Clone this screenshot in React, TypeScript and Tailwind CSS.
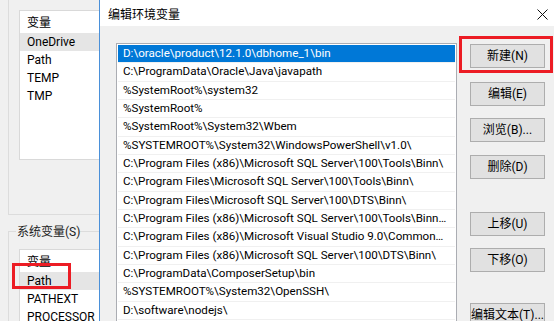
import React from "react";

const PATHS = [
  "D:\\oracle\\product\\12.1.0\\dbhome_1\\bin",
  "C:\\ProgramData\\Oracle\\Java\\javapath",
  "%SystemRoot%\\system32",
  "%SystemRoot%",
  "%SystemRoot%\\System32\\Wbem",
  "%SYSTEMROOT%\\System32\\WindowsPowerShell\\v1.0\\",
  "C:\\Program Files (x86)\\Microsoft SQL Server\\100\\Tools\\Binn\\",
  "C:\\Program Files\\Microsoft SQL Server\\100\\Tools\\Binn\\",
  "C:\\Program Files\\Microsoft SQL Server\\100\\DTS\\Binn\\",
  "C:\\Program Files (x86)\\Microsoft SQL Server\\100\\Tools\\Binn\\VSShell\\Common7\\IDE\\",
  "C:\\Program Files (x86)\\Microsoft Visual Studio 9.0\\Common7\\IDE\\PrivateAssemblies\\",
  "C:\\Program Files (x86)\\Microsoft SQL Server\\100\\DTS\\Binn\\",
  "C:\\ProgramData\\ComposerSetup\\bin",
  "%SYSTEMROOT%\\System32\\OpenSSH\\",
  "D:\\software\\nodejs\\",
  "",
];

// buttons on the right, with their top margin
const BUTTONS: { label: string; mt: string }[] = [
  { label: "新建(N)", mt: "mt-0" },
  { label: "编辑(E)", mt: "mt-[14px]" },
  { label: "浏览(B)...", mt: "mt-[12px]" },
  { label: "删除(D)", mt: "mt-[13px]" },
  { label: "上移(U)", mt: "mt-[33px]" },
  { label: "下移(O)", mt: "mt-[12px]" },
  { label: "编辑文本(T)...", mt: "mt-[31px]" },
];

const WinButton: React.FC<{ label: string; className?: string }> = ({ label, className }) => (
  <div
    className={[
      "w-[75px] h-[24px] shrink-0 bg-[#e1e1e1] border border-[#adadad] flex items-center justify-center whitespace-nowrap",
      className ?? "",
    ].join(" ")}
  >
    {label}
  </div>
);

const VarList: React.FC<{ rows: string[]; selected: number; height: string }> = ({
  rows,
  selected,
  height,
}) => (
  <div className={["w-[100px] bg-white border border-[#d9d9d9] overflow-hidden", height].join(" ")}>
    <div className="h-[21px] flex items-center pl-[7px] mt-[1px]">变量</div>
    {rows.map((r, i) => (
      <div
        key={r}
        className={[
          "h-[18px] flex items-center pl-[7px] whitespace-nowrap",
          i === selected ? "bg-[#e5e5e5]" : "",
        ].join(" ")}
      >
        {r}
      </div>
    ))}
  </div>
);

export default function App() {
  return (
    <div className="relative w-[554px] h-[321px] overflow-hidden bg-[#f0f0f0] text-[12px] text-black font-['Microsoft_YaHei_UI','Roboto','Noto_Sans_CJK_SC',sans-serif]">
      {/* window behind the dialog */}
      <div className="pl-2">
        <div className="h-[215px] w-[200px] border-l border-b border-[#dcdcdc] pl-[10px] pt-[10px]">
          <VarList rows={["OneDrive", "Path", "TEMP", "TMP"]} selected={0} height="h-[150px]" />
        </div>
        <div className="mt-[16px] w-[200px] h-[100px] border-l border-t border-[#dcdcdc] pl-[10px]">
          <div className="-mt-[9px] ml-[-3px] pl-[1px] w-fit bg-[#f0f0f0] text-[#222]">系统变量(S)</div>
          <div className="mt-[8px]">
            <VarList rows={["Path", "PATHEXT", "PROCESSOR_ARCHITECTURE"]} selected={0} height="h-[100px]" />
          </div>
        </div>
      </div>

      {/* red marker on system Path row */}
      <div className="absolute left-[12px] top-[263px] w-[59px] h-[26px] border-[3px] border-[#ec1c24]" />

      {/* edit dialog */}
      <div className="absolute left-[99px] top-0 w-[470px] h-[340px] border-l border-[#4a90d9] bg-[#f0f0f0] flex flex-col">
        <div className="h-[26px] bg-white flex items-center justify-between pl-[8px] pr-[21px] shrink-0">
          <span className="mt-[3px]">编辑环境变量</span>
          <svg width="11" height="11" viewBox="0 0 11 11" className="mt-[3px]">
            <path d="M0.5 0.5 L10.5 10.5 M10.5 0.5 L0.5 10.5" stroke="#111" strokeWidth="1" />
          </svg>
        </div>
        <div className="flex pl-[16px] pt-[17px] gap-[13px]">
          <div className="w-[341px] h-[300px] bg-white border border-[#abadb3] p-[1px] overflow-hidden shrink-0 text-[11.6px]">
            {PATHS.map((p, i) => (
              <div
                key={i}
                className={[
                  "h-[18.35px] pl-[5px] pr-[6px] leading-[17.35px] whitespace-nowrap overflow-hidden text-ellipsis border-b border-[#f0f0f0]",
                  i === 0 ? "bg-[#0078d7] text-white border-[#0078d7]" : "",
                ].join(" ")}
              >
                {p}
              </div>
            ))}
          </div>
          <div className="flex flex-col pt-[1px]">
            {BUTTONS.map((b) => (
              <WinButton key={b.label} label={b.label} className={b.mt} />
            ))}
          </div>
        </div>
      </div>

      {/* red marker on 新建 button */}
      <div className="absolute left-[459px] top-[36px] w-[94px] h-[37px] border-[3px] border-[#ec1c24]" />
    </div>
  );
}
